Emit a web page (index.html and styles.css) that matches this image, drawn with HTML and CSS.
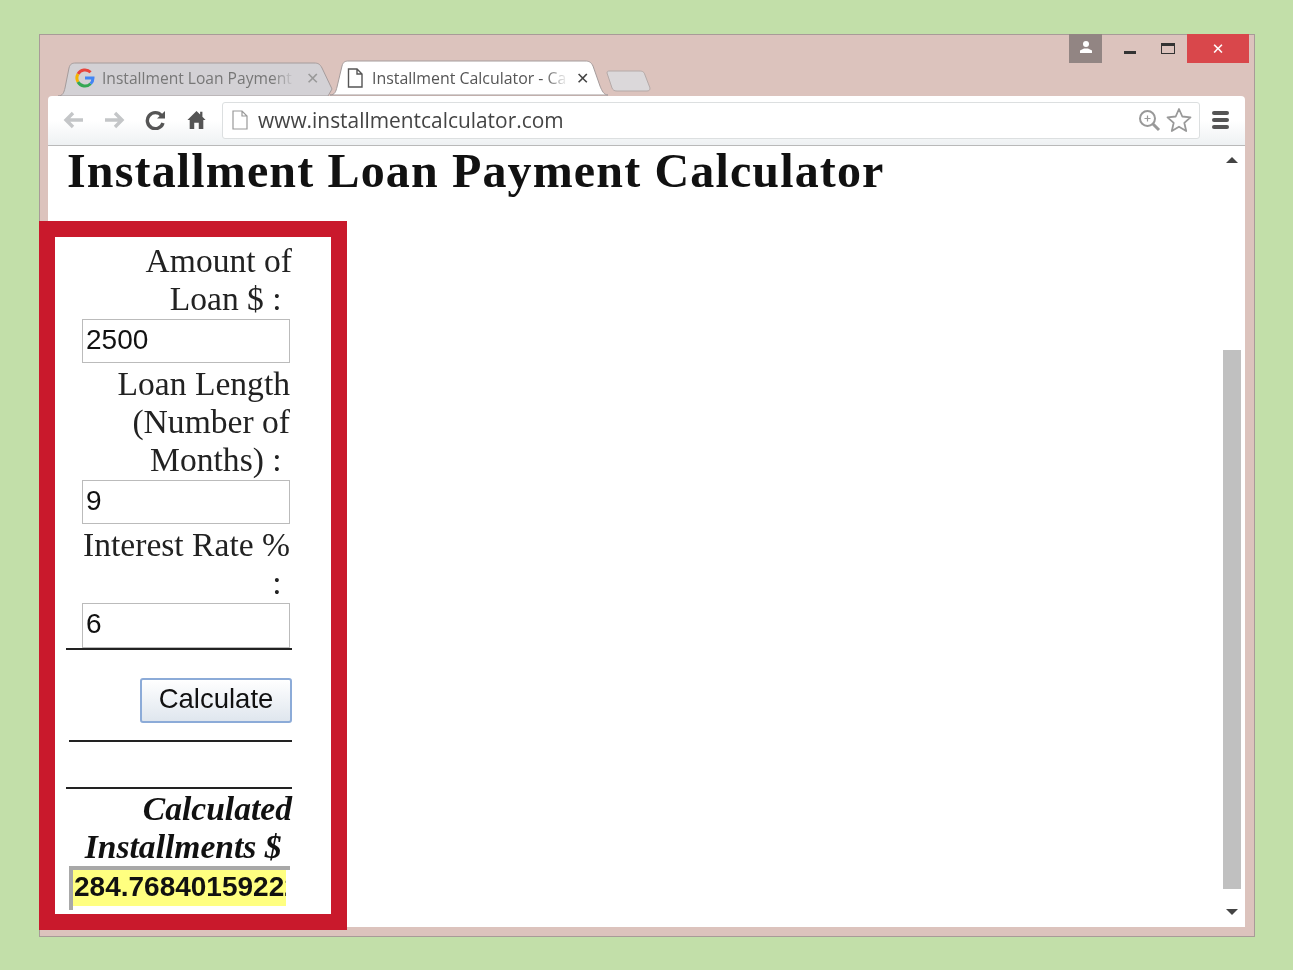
FILE: index.html
```html
<!DOCTYPE html>
<html>
<head>
  <title>Installment Calculator</title>
  <meta charset="UTF-8">
  <link rel="stylesheet" href="styles.css">
</head>
<body>
<div class="window">
  <div class="titlebar">
    <div class="tabs">
      <div class="tab tab_back">
        <svg class="tab_shape" width="276" height="34" viewBox="0 0 276 34"><path d="M0 34 C5 34 6 30 7 26 L11 6 C12 2 14 1 18 1 L256 1 C260 1 262 2 264 6 L274 27 L270 34 Z" fill="#d3d1d5" stroke="#a59c9c"/></svg>
        <svg class="fav" width="20" height="20" viewBox="0 0 20 20">
          <path d="M15.6 4.2 A8 8 0 0 0 3 6" fill="none" stroke="#e8453c" stroke-width="3"/>
          <path d="M3 6 A8 8 0 0 0 3 14" fill="none" stroke="#f4b400" stroke-width="3"/>
          <path d="M3 14 A8 8 0 0 0 15.6 15.8" fill="none" stroke="#34a853" stroke-width="3"/>
          <path d="M15.6 15.8 A8 8 0 0 0 18 10 L10 10" fill="none" stroke="#4285f4" stroke-width="3"/>
        </svg>
        <span class="tab_title">Installment Loan Payment</span>
        <span class="tab_x">✕</span>
      </div>
      <div class="tab tab_front">
        <svg class="tab_shape" width="278" height="36" viewBox="0 0 278 36"><path d="M0 35 C5 35 6 31 7 27 L12 6 C13 2 15 1 19 1 L255 1 C259 1 261 2 263 6 L270 26 C272 31 274 35 278 35 Z" fill="#fff" stroke="#a59c9c"/></svg>
        <svg class="fav" width="16" height="20" viewBox="0 0 16 20"><path d="M1.5 1 L10 1 L15 6 L15 19 L1.5 19 Z M10 1 L10 6 L15 6" fill="none" stroke="#555" stroke-width="1.4"/></svg>
        <span class="tab_title">Installment Calculator - Ca</span>
        <span class="tab_x dark">✕</span>
      </div>
      <svg class="tab_new" width="46" height="22" viewBox="0 0 46 22"><path d="M1 3 C1 1 2 1 4 1 L33 1 C37 1 38 2 39 5 L44 18 C44 20 43 21 41 21 L11 21 C8 21 7 20 6 18 Z" fill="#dbd8da" stroke="#b5aaa8"/></svg>
    </div>
    <div class="controls">
      <div class="ctl_user"><svg width="14" height="14" viewBox="0 0 14 14"><circle cx="7" cy="4" r="3" fill="#fff"/><path d="M1 13 L1 10.500 L5 8.500 L9 8.500 L13 10.500 L13 13 Z" fill="#fff"/></svg></div>
      <div class="ctl_min"><span></span></div>
      <div class="ctl_max"><span></span></div>
      <div class="ctl_close">✕</div>
    </div>
  </div>

  <div class="toolbar">
    <svg class="tb_icon" viewBox="0 0 21 20"><path d="M10 3 L3 10 L10 17 M3 10 L20 10" fill="none" stroke="#c4c6c8" stroke-width="3.400"/></svg>
    <svg class="tb_icon" viewBox="0 0 21 20"><path d="M11 3 L18 10 L11 17 M18 10 L1 10" fill="none" stroke="#c4c6c8" stroke-width="3.400"/></svg>
    <svg class="tb_icon" viewBox="0 0 21 20"><path d="M16.500 5.500 A8 8 0 1 0 18 13" fill="none" stroke="#555" stroke-width="3.400"/><path d="M12 8.500 L20 8.500 L20 1 Z" fill="#555"/></svg>
    <svg class="tb_icon" viewBox="0 0 21 22"><path d="M10.500 1 L0.500 11 L3 11 L3 21 L8 21 L8 14 L13 14 L13 21 L18 21 L18 11 L20.500 11 L17 7.500 L17 2 L14.500 2 L14.500 5 Z" fill="#555"/></svg>
    <div class="omnibox">
      <svg class="page_icon" width="16" height="20" viewBox="0 0 16 20"><path d="M1 1 L10 1 L15 6 L15 19 L1 19 Z M10 1 L10 6 L15 6" fill="#fff" stroke="#999" stroke-width="1.200"/></svg>
      <span class="url">www.installmentcalculator.com</span>
      <svg class="zoom_icon" width="23" height="23" viewBox="0 0 23 23"><circle cx="9.500" cy="9.500" r="7.500" fill="none" stroke="#999" stroke-width="2"/><path d="M15 15 L21 21" stroke="#999" stroke-width="3"/><path d="M6.500 9.500 L12.500 9.500 M9.500 6.500 L9.500 12.500" stroke="#999" stroke-width="1.200"/></svg>
      <svg class="star_icon" width="26" height="26" viewBox="0 0 26 26"><path d="M13 2 L16.300 9.500 L24.500 10.300 L18.300 15.800 L20.200 24 L13 19.700 L5.800 24 L7.700 15.800 L1.500 10.300 L9.700 9.500 Z" fill="#fff" stroke="#999" stroke-width="1.800" stroke-linejoin="round"/></svg>
    </div>
    <div class="menu"><span></span><span></span><span></span></div>
  </div>

  <div class="page">
    <div class="content">
      <h1>Installment Loan Payment Calculator</h1>
    </div>
    <div class="scrollbar">
      <div class="arrow_up"></div>
      <div class="thumb"></div>
      <div class="arrow_down"></div>
    </div>
  </div>

  <div class="highlight">
    <div class="form">
      <div class="lbl"><span class="nudge">Amount of</span><br>Loan $ :&nbsp;</div>
      <input class="field" type="text" value="2500">
      <div class="lbl">Loan Length (Number of Months) :&nbsp;</div>
      <input class="field" type="text" value="9">
      <div class="lbl">Interest Rate % :&nbsp;</div>
      <input class="field field_last" type="text" value="6">
      <div class="line"></div>
      <div class="btn_row"><button class="bt_calc">Calculate</button></div>
      <div class="line line2"></div>
      <div class="line line3"></div>
      <div class="lbl lbl_result"><span class="nudge">Calculated</span><br>Installments $&nbsp;</div>
      <div class="result"><input class="result_val" type="text" value="284.76840159222" readonly></div>
    </div>
  </div>
</div>
</body>
</html>
```

FILE: styles.css
```css
body {
  margin: 0;
  height: 970px;
  background: #c2dfa9;
  overflow: hidden;
  padding-top: 34px;
  box-sizing: border-box;
}
.window {
  position: relative;
  width: 1216px;
  height: 903px;
  margin-left: 39px;
  box-sizing: border-box;
  border: 1px solid #a89b98;
  background: #dcc3bd;
  padding: 0 9px 0 8px;
  filter: blur(0.4px);
}

/* title bar */
.titlebar {
  display: flex;
  height: 61px;
  font-family: "Open Sans", sans-serif;
}
.tabs {
  display: flex;
  align-items: flex-end;
  margin-left: 10px;
}
.tab {
  position: relative;
  display: flex;
  align-items: center;
  height: 34px;
  font-size: 15.600px;
  color: #777;
}
.tab_shape {
  position: absolute;
  left: 0;
  bottom: 0;
}
.tab_back {
  width: 272px;
  padding-bottom: 2px;
  box-sizing: border-box;
}
.tab_front {
  width: 276px;
  height: 36px;
  font-size: 15.900px;
  color: #555;
}
.fav {
  position: relative;
  margin-left: 17px;
}
.tab_title {
  position: relative;
  margin-left: 7px;
  width: 193px;
  white-space: nowrap;
  -webkit-mask-image: linear-gradient(to right, #000 88%, transparent);
  mask-image: linear-gradient(to right, #000 88%, transparent);
}
.tab_front .tab_title {
  margin-left: 9px;
  width: 196px;
}
.tab_x {
  position: relative;
  margin-left: 11px;
  font: bold 16px "DejaVu Sans", sans-serif;
  color: #999;
}
.tab_x.dark {
  margin-left: 8px;
  color: #444;
}
.tab_new {
  margin: 0 0 4px 0;
}
.controls {
  display: flex;
  margin-left: auto;
  margin-top: -1px;
  margin-right: -4px;
  height: 29px;
}
.ctl_user {
  width: 33px;
  background: #928583;
  display: flex;
  align-items: center;
  justify-content: center;
  padding-bottom: 4px;
  box-sizing: border-box;
}
.ctl_min {
  width: 55px;
}
.ctl_min span {
  display: block;
  width: 12px;
  height: 3px;
  background: #333;
  margin: 17px 0 0 22px;
}
.ctl_max {
  width: 30px;
}
.ctl_max span {
  display: block;
  box-sizing: border-box;
  width: 14px;
  height: 11px;
  border: 1.5px solid #333;
  border-top-width: 3px;
  margin: 9px 0 0 4px;
}
.ctl_close {
  width: 62px;
  background: #d9474b;
  color: #fff;
  font: bold 15px "DejaVu Sans", sans-serif;
  text-align: center;
  line-height: 30px;
}

/* toolbar */
.toolbar {
  display: flex;
  align-items: center;
  height: 50px;
  box-sizing: border-box;
  padding: 0 16px 1px 15px;
  gap: 20px;
  background: linear-gradient(#fff 50%, #eef1f3);
  border-bottom: 1px solid #b9b9b9;
  border-radius: 4px 4px 0 0;
}
.tb_icon {
  width: 21px;
  height: 20px;
  flex: none;
}
.omnibox {
  flex: 1;
  display: flex;
  align-items: center;
  height: 37px;
  margin: 0 -8px 0 -5px;
  padding: 0 7px 0 9px;
  background: #fff;
  border: 1px solid #dcdfe0;
  border-radius: 3px;
  box-sizing: border-box;
}
.url {
  margin-left: 10px;
  font: 20.900px "Open Sans", sans-serif;
  color: #444;
}
.zoom_icon {
  margin-left: auto;
}
.star_icon {
  margin-left: 5px;
}
.menu {
  display: flex;
  flex-direction: column;
  gap: 3px;
  width: 17px;
}
.menu span {
  height: 4px;
  background: #555;
  border-radius: 2px;
}

/* page */
.page {
  display: flex;
  height: 781px;
  background: #fff;
}
.content {
  flex: 1;
  padding-left: 19px;
}
h1 {
  margin: 0;
  font: bold 48px/50px "Liberation Serif", serif;
  letter-spacing: 1.150px;
  color: #111;
}
.scrollbar {
  width: 18px;
  margin-right: 4px;
  display: flex;
  flex-direction: column;
  align-items: center;
}
.arrow_up {
  margin-top: 11px;
  border: 6px solid transparent;
  border-top: 0;
  border-bottom: 6px solid #444;
}
.thumb {
  width: 18px;
  height: 539px;
  margin-top: 187px;
  background: #c0c0c0;
}
.arrow_down {
  margin-top: 20px;
  border: 6px solid transparent;
  border-bottom: 0;
  border-top: 6px solid #444;
}

/* red frame over the page */
.highlight {
  position: absolute;
  left: -1px;
  top: 186px;
  width: 308px;
  height: 709px;
  box-sizing: border-box;
  border: 16px solid #c9192c;
  background: #fff;
}
.form {
  width: 226px;
  margin-left: 11px;
  padding-top: 5px;
  font: 33.600px/38px "Liberation Serif", serif;
  color: #222;
  text-align: right;
}
.lbl {
  padding-right: 2px;
}
.nudge {
  margin-right: -2px;
}
.field {
  display: block;
  width: 208px;
  height: 44px;
  margin: 1px 2px 0 auto;
  padding: 0 3px 3px;
  box-sizing: border-box;
  border: 1px solid #bbb;
  font: 28px "Liberation Sans", sans-serif;
  color: #111;
}
.field + .lbl {
  margin-top: 2px;
}
.field_last {
  height: 45px;
}
.line {
  border-top: 2px solid #222;
}
.btn_row {
  margin-top: 28px;
  height: 45px;
}
.bt_calc {
  width: 152px;
  height: 45px;
  box-sizing: border-box;
  border: 2px solid #8cabd8;
  border-radius: 3px;
  background: linear-gradient(#fff, #dfe6ee);
  font: 27.500px "Liberation Sans", sans-serif;
  color: #111;
  padding: 0 0 3px;
}
.line2 {
  margin: 17px 0 0 3px;
}
.line3 {
  margin-top: 45px;
}
.lbl_result {
  margin-top: 1px;
  font-style: italic;
  font-weight: bold;
  color: #111;
}
.result {
  width: 221px;
  height: 44px;
  margin: 0 2px 0 auto;
  box-sizing: border-box;
  border-top: 4px solid #a8a8a8;
  border-left: 4px solid #a8a8a8;
}
.result_val {
  display: block;
  width: 213px;
  height: 36px;
  border: 0;
  padding: 0 0 2px 1px;
  box-sizing: border-box;
  background: #ffff80;
  font: bold 28px "Liberation Sans", sans-serif;
  color: #111;
  outline: 0;
}
```
